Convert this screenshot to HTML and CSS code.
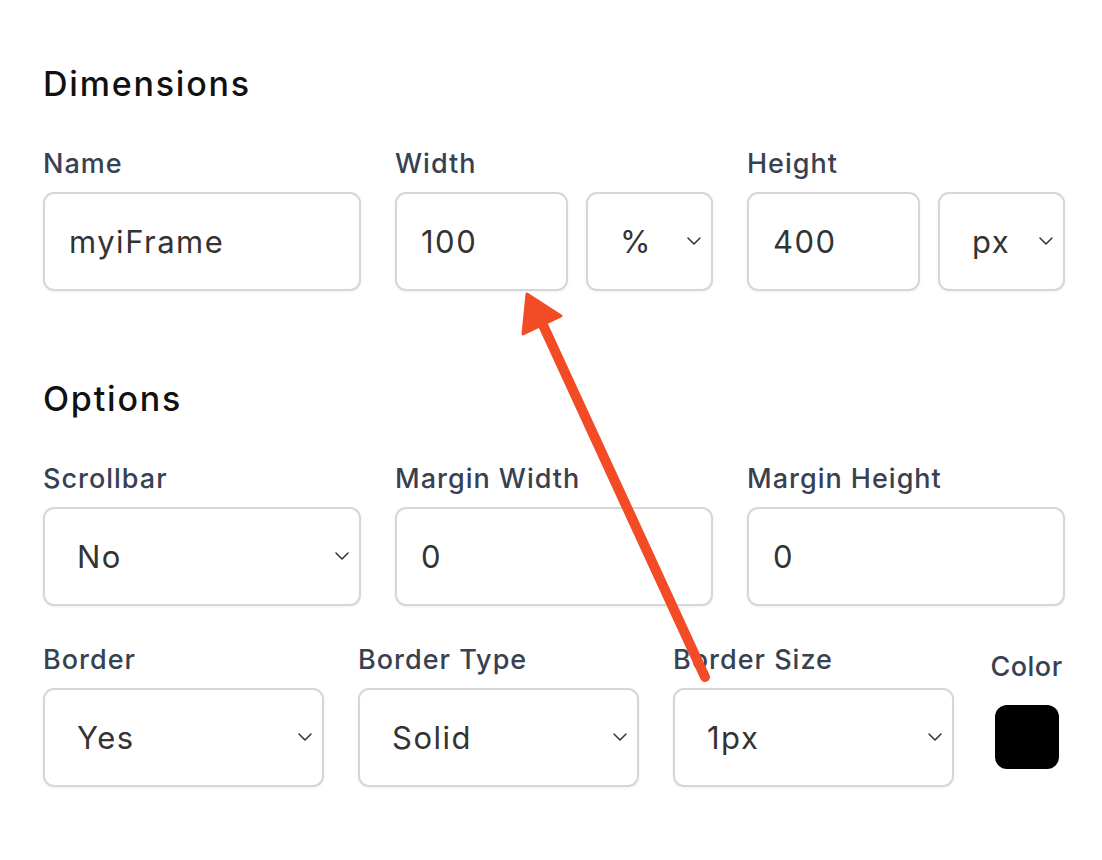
FILE: index.html
```html
<!DOCTYPE html>
<html lang="en">
<head>
<meta charset="utf-8">
<title>iFrame Generator</title>
<link rel="stylesheet" href="styles.css">
</head>
<body>
<div class="page">
  <h2 class="section-title">Dimensions</h2>
  <div class="grid-3">
    <div class="field">
      <label class="label">Name</label>
      <input class="control input" type="text" value="myiFrame">
    </div>
    <div class="field">
      <label class="label">Width</label>
      <div class="pair">
        <input class="control input" type="text" value="100">
        <div class="select-wrap">
          <select class="control select"><option>%</option></select>
          <svg class="chev" width="14" height="8" viewBox="0 0 14 8"><path d="M1 1l6 6 6-6" fill="none" stroke="#333" stroke-width="1.5" stroke-linecap="round" stroke-linejoin="round"/></svg>
        </div>
      </div>
    </div>
    <div class="field">
      <label class="label">Height</label>
      <div class="pair">
        <input class="control input" type="text" value="400">
        <div class="select-wrap">
          <select class="control select"><option>px</option></select>
          <svg class="chev" width="14" height="8" viewBox="0 0 14 8"><path d="M1 1l6 6 6-6" fill="none" stroke="#333" stroke-width="1.5" stroke-linecap="round" stroke-linejoin="round"/></svg>
        </div>
      </div>
    </div>
  </div>

  <h2 class="section-title options-title">Options</h2>
  <div class="grid-3">
    <div class="field">
      <label class="label">Scrollbar</label>
      <div class="select-wrap">
        <select class="control select"><option>No</option></select>
        <svg class="chev" width="14" height="8" viewBox="0 0 14 8"><path d="M1 1l6 6 6-6" fill="none" stroke="#333" stroke-width="1.5" stroke-linecap="round" stroke-linejoin="round"/></svg>
      </div>
    </div>
    <div class="field">
      <label class="label">Margin Width</label>
      <input class="control input" type="text" value="0">
    </div>
    <div class="field">
      <label class="label">Margin Height</label>
      <input class="control input" type="text" value="0">
    </div>
  </div>

  <div class="grid-4">
    <div class="field">
      <label class="label">Border</label>
      <div class="select-wrap">
        <select class="control select"><option>Yes</option></select>
        <svg class="chev" width="14" height="8" viewBox="0 0 14 8"><path d="M1 1l6 6 6-6" fill="none" stroke="#333" stroke-width="1.5" stroke-linecap="round" stroke-linejoin="round"/></svg>
      </div>
    </div>
    <div class="field">
      <label class="label">Border Type</label>
      <div class="select-wrap">
        <select class="control select"><option>Solid</option></select>
        <svg class="chev" width="14" height="8" viewBox="0 0 14 8"><path d="M1 1l6 6 6-6" fill="none" stroke="#333" stroke-width="1.5" stroke-linecap="round" stroke-linejoin="round"/></svg>
      </div>
    </div>
    <div class="field">
      <label class="label">Border Size</label>
      <div class="select-wrap">
        <select class="control select"><option>1px</option></select>
        <svg class="chev" width="14" height="8" viewBox="0 0 14 8"><path d="M1 1l6 6 6-6" fill="none" stroke="#333" stroke-width="1.5" stroke-linecap="round" stroke-linejoin="round"/></svg>
      </div>
    </div>
    <div class="field color-field">
      <label class="label">Color</label>
      <div class="swatch"></div>
    </div>
  </div>

  <svg class="annotation" width="1102" height="860" viewBox="0 0 1102 860">
    <line x1="705" y1="677" x2="543" y2="325" stroke="#f24b26" stroke-width="10" stroke-linecap="round"/>
    <polygon points="527,294 523,334 561,316" fill="#f24b26" stroke="#f24b26" stroke-width="3" stroke-linejoin="round"/>
  </svg>
</div>
</body>
</html>
```

FILE: styles.css
```css
* { box-sizing: border-box; }

html, body {
  margin: 0;
  padding: 0;
  background: #ffffff;
}

body {
  font-family: Inter, "Noto Sans", "Liberation Sans", sans-serif;
}

.page {
  position: relative;
  width: 1102px;
  height: 860px;
  padding: 64px 37px 0 43px;
}

.section-title {
  margin: 0;
  font-size: 34px;
  line-height: 40px;
  font-weight: 500;
  color: #111111;
  letter-spacing: 1.8px;
}

.options-title {
  margin-top: 88px;
}

.grid-3 {
  display: grid;
  grid-template-columns: repeat(3, 318px);
  column-gap: 34px;
  margin-top: 44px;
}

.options-title + .grid-3 {
  margin-top: 44px;
}

.grid-4 {
  display: grid;
  grid-template-columns: 281px 281px 281px 77px;
  column-gap: 34px;
  margin-top: 38px;
}

.field {
  display: flex;
  flex-direction: column;
  min-width: 0;
}

.label {
  font-size: 27px;
  line-height: 32px;
  font-weight: 500;
  color: #374151;
  margin-bottom: 12px;
  white-space: nowrap;
  letter-spacing: 1px;
}

.pair {
  display: grid;
  grid-template-columns: 173px 127px;
  column-gap: 18px;
}

.control {
  display: block;
  width: 100%;
  height: 99px;
  border: 2px solid #d3d7dd;
  border-radius: 11px;
  background: #ffffff;
  box-shadow: 0 1px 3px rgba(0, 0, 0, 0.06);
  font-family: inherit;
  font-size: 31px;
  letter-spacing: 1.5px;
  color: #333333;
  outline: none;
  margin: 0;
}

.input {
  padding: 0 0 0 24px;
}

.select-wrap {
  position: relative;
}

.select {
  -webkit-appearance: none;
  appearance: none;
  padding: 0 0 0 32px;
}

.chev {
  position: absolute;
  right: 12px;
  top: 45px;
  pointer-events: none;
}

.color-field {
  align-items: center;
  padding-top: 7px;
}

.color-field .label {
  margin-bottom: 22px;
  letter-spacing: 0.5px;
}

.swatch {
  width: 64px;
  height: 64px;
  border-radius: 12px;
  background: #000000;
}

.annotation {
  position: absolute;
  left: 0;
  top: 0;
  pointer-events: none;
}
```
